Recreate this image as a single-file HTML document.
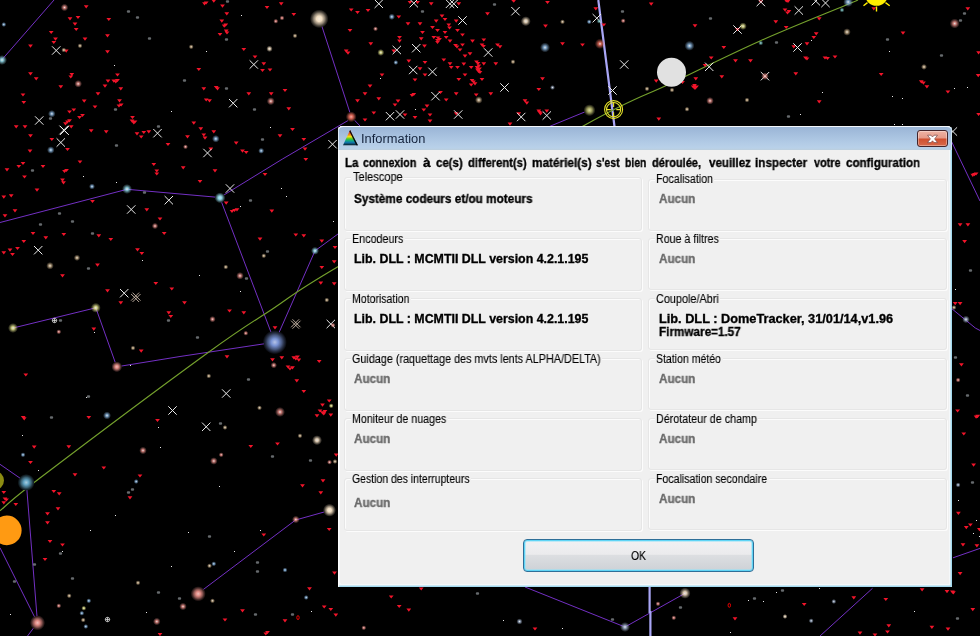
<!DOCTYPE html>
<html lang="fr"><head><meta charset="utf-8"><title>Information</title>
<style>
html,body{margin:0;padding:0;background:#000;}
body{width:980px;height:636px;overflow:hidden;position:relative;font-family:"Liberation Sans", sans-serif;font-size:12px;}
#sky{position:absolute;left:0;top:0;display:block}
#dlg{position:absolute;left:338px;top:126px;width:614px;height:461px;box-sizing:border-box;
  background:#f0f0f0;border-radius:4.5px 4.5px 1px 1px;overflow:hidden;
  box-shadow:inset 1px 0 0 #ffffff, inset -1.5px -1.5px 0 #a4d9ee, inset 0 0 0 3px #f5f8fa;}
#title{position:absolute;left:0;top:0;width:614px;height:24px;
  background:linear-gradient(#9ab5d6 0px,#a2bcdb 5px,#b1cae5 15px,#b9d1e9 21px,#bccedd 23px,#c4d2de 24px);
  border-top:1px solid #f4f8fc;box-sizing:border-box;border-radius:4.5px 4.5px 0 0;
  box-shadow:inset 1px 0 0 #dfeaf6, inset -1px 0 0 #cfe6f4;}
#title svg.ico{position:absolute;left:5px;top:3px}
#client{position:absolute;left:2px;top:24px;width:608px;height:433px;background:#f0f0f0}
#msg{position:absolute;left:0;top:0;width:608px;height:26px}
#close{position:absolute;left:579px;top:3px;width:31px;height:17px;box-sizing:border-box;border:1px solid #43252b;border-radius:3px;
  background:linear-gradient(#eeb3a4 0,#e59a88 48%,#cf4f2f 52%,#d8694a 100%);box-shadow:inset 0 0 0 1px rgba(255,255,255,.35)}
#close svg{position:absolute;left:8px;top:3px}
.gb{position:absolute;box-sizing:border-box;border:1px solid #e6e6e6;border-radius:3px;box-shadow:inset 1px 1px 0 #fcfcfc, 1px 1px 0 #fcfcfc}
.t{position:absolute;white-space:nowrap;line-height:14px;font-size:12px;color:#000;transform-origin:0 0;will-change:transform;-webkit-text-stroke:0.12px #000}
.t.b{font-weight:bold;-webkit-text-stroke:0.32px #000}
.t.g{color:#6a6a6a;-webkit-text-stroke-color:#6a6a6a}
.t.ttl{color:#14233c;-webkit-text-stroke:0}
.cap{position:absolute;height:13px;background:#f0f0f0}
#ok{position:absolute;left:183px;top:389px;width:231px;height:33px;box-sizing:border-box;border:1px solid #2f6f98;border-radius:4px;
  background:linear-gradient(#f1f1f3 0,#ebebed 46%,#dcdee1 50%,#cdd1d6 100%);
  box-shadow:inset 0 0 0 1px #5fd4f5, inset 0 0 0 2px rgba(150,225,248,.55);}
</style></head>
<body>
<svg id="sky" width="980" height="636" viewBox="0 0 980 636">
<defs>
<radialGradient id="g0"><stop offset="0" stop-color="#fff" stop-opacity="0.9"/><stop offset="0.3" stop-color="#62a4c4" stop-opacity="0.9"/><stop offset="0.65" stop-color="#62a4c4" stop-opacity="0.4"/><stop offset="1" stop-color="#62a4c4" stop-opacity="0"/></radialGradient>
<radialGradient id="G0"><stop offset="0" stop-color="#a9cddf"/><stop offset="0.3" stop-color="#62a4c4"/><stop offset="0.6" stop-color="#406b7f" stop-opacity="0.9"/><stop offset="0.82" stop-color="#27424e" stop-opacity="0.6"/><stop offset="1" stop-color="#27424e" stop-opacity="0"/></radialGradient>
<radialGradient id="g1"><stop offset="0" stop-color="#fff" stop-opacity="0.9"/><stop offset="0.3" stop-color="#6fb0b0" stop-opacity="0.9"/><stop offset="0.65" stop-color="#6fb0b0" stop-opacity="0.4"/><stop offset="1" stop-color="#6fb0b0" stop-opacity="0"/></radialGradient>
<radialGradient id="G1"><stop offset="0" stop-color="#b0d4d4"/><stop offset="0.3" stop-color="#6fb0b0"/><stop offset="0.6" stop-color="#487272" stop-opacity="0.9"/><stop offset="0.82" stop-color="#2c4646" stop-opacity="0.6"/><stop offset="1" stop-color="#2c4646" stop-opacity="0"/></radialGradient>
<radialGradient id="g2"><stop offset="0" stop-color="#fff" stop-opacity="0.9"/><stop offset="0.3" stop-color="#7892d4" stop-opacity="0.9"/><stop offset="0.65" stop-color="#7892d4" stop-opacity="0.4"/><stop offset="1" stop-color="#7892d4" stop-opacity="0"/></radialGradient>
<radialGradient id="G2"><stop offset="0" stop-color="#b5c3e7"/><stop offset="0.3" stop-color="#7892d4"/><stop offset="0.6" stop-color="#4e5f8a" stop-opacity="0.9"/><stop offset="0.82" stop-color="#303a55" stop-opacity="0.6"/><stop offset="1" stop-color="#303a55" stop-opacity="0"/></radialGradient>
<radialGradient id="g3"><stop offset="0" stop-color="#fff" stop-opacity="0.9"/><stop offset="0.3" stop-color="#86b0d8" stop-opacity="0.9"/><stop offset="0.65" stop-color="#86b0d8" stop-opacity="0.4"/><stop offset="1" stop-color="#86b0d8" stop-opacity="0"/></radialGradient>
<radialGradient id="G3"><stop offset="0" stop-color="#bcd4ea"/><stop offset="0.3" stop-color="#86b0d8"/><stop offset="0.6" stop-color="#57728c" stop-opacity="0.9"/><stop offset="0.82" stop-color="#364656" stop-opacity="0.6"/><stop offset="1" stop-color="#364656" stop-opacity="0"/></radialGradient>
<radialGradient id="g4"><stop offset="0" stop-color="#fff" stop-opacity="0.9"/><stop offset="0.3" stop-color="#8fd4e4" stop-opacity="0.9"/><stop offset="0.65" stop-color="#8fd4e4" stop-opacity="0.4"/><stop offset="1" stop-color="#8fd4e4" stop-opacity="0"/></radialGradient>
<radialGradient id="G4"><stop offset="0" stop-color="#c1e7f0"/><stop offset="0.3" stop-color="#8fd4e4"/><stop offset="0.6" stop-color="#5d8a94" stop-opacity="0.9"/><stop offset="0.82" stop-color="#39555b" stop-opacity="0.6"/><stop offset="1" stop-color="#39555b" stop-opacity="0"/></radialGradient>
<radialGradient id="g5"><stop offset="0" stop-color="#fff" stop-opacity="0.9"/><stop offset="0.3" stop-color="#a0b0c8" stop-opacity="0.9"/><stop offset="0.65" stop-color="#a0b0c8" stop-opacity="0.4"/><stop offset="1" stop-color="#a0b0c8" stop-opacity="0"/></radialGradient>
<radialGradient id="G5"><stop offset="0" stop-color="#cbd4e1"/><stop offset="0.3" stop-color="#a0b0c8"/><stop offset="0.6" stop-color="#687282" stop-opacity="0.9"/><stop offset="0.82" stop-color="#404650" stop-opacity="0.6"/><stop offset="1" stop-color="#404650" stop-opacity="0"/></radialGradient>
<radialGradient id="g6"><stop offset="0" stop-color="#fff" stop-opacity="0.9"/><stop offset="0.3" stop-color="#b4b46c" stop-opacity="0.9"/><stop offset="0.65" stop-color="#b4b46c" stop-opacity="0.4"/><stop offset="1" stop-color="#b4b46c" stop-opacity="0"/></radialGradient>
<radialGradient id="G6"><stop offset="0" stop-color="#d6d6ae"/><stop offset="0.3" stop-color="#b4b46c"/><stop offset="0.6" stop-color="#757546" stop-opacity="0.9"/><stop offset="0.82" stop-color="#48482b" stop-opacity="0.6"/><stop offset="1" stop-color="#48482b" stop-opacity="0"/></radialGradient>
<radialGradient id="g7"><stop offset="0" stop-color="#fff" stop-opacity="0.9"/><stop offset="0.3" stop-color="#c9b08c" stop-opacity="0.9"/><stop offset="0.65" stop-color="#c9b08c" stop-opacity="0.4"/><stop offset="1" stop-color="#c9b08c" stop-opacity="0"/></radialGradient>
<radialGradient id="G7"><stop offset="0" stop-color="#e1d4c0"/><stop offset="0.3" stop-color="#c9b08c"/><stop offset="0.6" stop-color="#83725b" stop-opacity="0.9"/><stop offset="0.82" stop-color="#504638" stop-opacity="0.6"/><stop offset="1" stop-color="#504638" stop-opacity="0"/></radialGradient>
<radialGradient id="g8"><stop offset="0" stop-color="#fff" stop-opacity="0.9"/><stop offset="0.3" stop-color="#dede8a" stop-opacity="0.9"/><stop offset="0.65" stop-color="#dede8a" stop-opacity="0.4"/><stop offset="1" stop-color="#dede8a" stop-opacity="0"/></radialGradient>
<radialGradient id="G8"><stop offset="0" stop-color="#ededbf"/><stop offset="0.3" stop-color="#dede8a"/><stop offset="0.6" stop-color="#90905a" stop-opacity="0.9"/><stop offset="0.82" stop-color="#595937" stop-opacity="0.6"/><stop offset="1" stop-color="#595937" stop-opacity="0"/></radialGradient>
<radialGradient id="g9"><stop offset="0" stop-color="#fff" stop-opacity="0.9"/><stop offset="0.3" stop-color="#e06a5a" stop-opacity="0.9"/><stop offset="0.65" stop-color="#e06a5a" stop-opacity="0.4"/><stop offset="1" stop-color="#e06a5a" stop-opacity="0"/></radialGradient>
<radialGradient id="G9"><stop offset="0" stop-color="#eeada4"/><stop offset="0.3" stop-color="#e06a5a"/><stop offset="0.6" stop-color="#92453a" stop-opacity="0.9"/><stop offset="0.82" stop-color="#5a2a24" stop-opacity="0.6"/><stop offset="1" stop-color="#5a2a24" stop-opacity="0"/></radialGradient>
<radialGradient id="g10"><stop offset="0" stop-color="#fff" stop-opacity="0.9"/><stop offset="0.3" stop-color="#e08a84" stop-opacity="0.9"/><stop offset="0.65" stop-color="#e08a84" stop-opacity="0.4"/><stop offset="1" stop-color="#e08a84" stop-opacity="0"/></radialGradient>
<radialGradient id="G10"><stop offset="0" stop-color="#eebfbb"/><stop offset="0.3" stop-color="#e08a84"/><stop offset="0.6" stop-color="#925a56" stop-opacity="0.9"/><stop offset="0.82" stop-color="#5a3735" stop-opacity="0.6"/><stop offset="1" stop-color="#5a3735" stop-opacity="0"/></radialGradient>
<radialGradient id="g11"><stop offset="0" stop-color="#fff" stop-opacity="0.9"/><stop offset="0.3" stop-color="#f0dcc0" stop-opacity="0.9"/><stop offset="0.65" stop-color="#f0dcc0" stop-opacity="0.4"/><stop offset="1" stop-color="#f0dcc0" stop-opacity="0"/></radialGradient>
<radialGradient id="G11"><stop offset="0" stop-color="#f7ecdc"/><stop offset="0.3" stop-color="#f0dcc0"/><stop offset="0.6" stop-color="#9c8f7d" stop-opacity="0.9"/><stop offset="0.82" stop-color="#60584d" stop-opacity="0.6"/><stop offset="1" stop-color="#60584d" stop-opacity="0"/></radialGradient>
</defs>
<rect width="980" height="636" fill="#000"/>
<path d="M54 0L2.5 59" stroke="#7330c4" stroke-width="1.0" fill="none"/>
<path d="M319.3 18.3L351.3 116.8" stroke="#7330c4" stroke-width="1.0" fill="none"/>
<path d="M351.3 118.6L282.5 159L219.8 197.5" stroke="#7330c4" stroke-width="1.0" fill="none"/>
<path d="M351.3 116.8L360 126" stroke="#7330c4" stroke-width="1.0" fill="none"/>
<path d="M545 128.3L589.5 110" stroke="#7330c4" stroke-width="1.0" fill="none"/>
<path d="M0 222.5L127 189.3L219.8 197.5" stroke="#7330c4" stroke-width="1.0" fill="none"/>
<path d="M219.8 197.5L274.8 342.2" stroke="#7330c4" stroke-width="1.0" fill="none"/>
<path d="M274.8 342.2L315 250.8L340 232.5" stroke="#7330c4" stroke-width="1.0" fill="none"/>
<path d="M274.8 342.2L180 356.5L116.8 366.8" stroke="#7330c4" stroke-width="1.0" fill="none"/>
<path d="M116.8 366.8L95.8 307.8L13 328" stroke="#7330c4" stroke-width="1.0" fill="none"/>
<path d="M0 464.3L26.3 482.5" stroke="#7330c4" stroke-width="1.0" fill="none"/>
<path d="M26.3 482.5L37.5 622.8" stroke="#7330c4" stroke-width="1.0" fill="none"/>
<path d="M0 547.8L37.5 622.8L27.5 636" stroke="#7330c4" stroke-width="1.0" fill="none"/>
<path d="M198 593.5L295.6 520L329.5 510.5" stroke="#7330c4" stroke-width="1.0" fill="none"/>
<path d="M525 587L625 627L685 593.3" stroke="#7330c4" stroke-width="1.0" fill="none"/>
<path d="M872.5 588.3L820 636" stroke="#7330c4" stroke-width="1.0" fill="none"/>
<path d="M953 557.8L980 548.4" stroke="#7330c4" stroke-width="1.0" fill="none"/>
<path d="M946 130L980 201" stroke="#7330c4" stroke-width="1.0" fill="none"/>
<path d="M940 299L975.3 328L980 330.5" stroke="#7330c4" stroke-width="1.0" fill="none"/>
<path d="M598.3 0L614.3 125L622 190" stroke="#a9a6f6" stroke-width="2.2" fill="none"/>
<path d="M649.6 580L649.6 612L650.4 612L650.4 636" stroke="#a9a6f6" stroke-width="2.2" fill="none"/>
<path d="M0 510.8C6.9 505.2 6.7 503.3 41.3 477C75.9 450.7 169.0 381.0 207.5 353C246.0 325.0 250.4 323.6 272.5 309C294.6 294.4 287.9 296.2 340 265.5C392.1 234.8 530.0 155.3 585 125C640.0 94.7 640.8 97.8 670 83.8C699.2 69.8 730.8 54.0 760 41C789.2 28.0 828.7 12.3 845 5.5C861.3 -1.3 855.8 0.9 858 0" stroke="#74a02c" stroke-width="1.15" fill="none"/>
<path d="M83.8 5.2h4.8l-2.4 3.2zM75.6 15.9h4.8l-2.4 3.2zM72.6 22.6h4.8l-2.4 3.2zM73.8 27.9h4.8l-2.4 3.2zM106.4 17.9h4.8l-2.4 3.2zM48.8 30.9h4.8l-2.4 3.2zM53.1 37.6h4.8l-2.4 3.2zM51.4 40.9h4.8l-2.4 3.2zM82.6 37.6h4.8l-2.4 3.2zM105.1 34.2h4.8l-2.4 3.2zM28.1 44.6h4.8l-2.4 3.2zM105.1 50.2h4.8l-2.4 3.2zM28.1 72.2h4.8l-2.4 3.2zM33.8 77.2h4.8l-2.4 3.2zM69.4 72.9h4.8l-2.4 3.2zM68.4 75.4h4.8l-2.4 3.2zM58.4 85.2h4.8l-2.4 3.2zM115.1 73.4h4.8l-2.4 3.2zM105.6 79.6h4.8l-2.4 3.2zM111.4 79.6h4.8l-2.4 3.2zM113.4 80.4h4.8l-2.4 3.2zM115.1 78.9h4.8l-2.4 3.2zM102.6 84.6h4.8l-2.4 3.2zM95.6 92.2h4.8l-2.4 3.2zM20.6 93.4h4.8l-2.4 3.2zM21.4 100.9h4.8l-2.4 3.2zM81.8 99.6h4.8l-2.4 3.2zM92.6 105.4h4.8l-2.4 3.2zM117.1 99.2h4.8l-2.4 3.2zM118.8 103.4h4.8l-2.4 3.2zM116.6 104.4h4.8l-2.4 3.2zM71.4 108.4h4.8l-2.4 3.2zM67.1 110.4h4.8l-2.4 3.2zM80.1 113.9h4.8l-2.4 3.2zM77.1 115.9h4.8l-2.4 3.2zM67.1 119.2h4.8l-2.4 3.2zM63.1 122.2h4.8l-2.4 3.2zM65.1 120.4h4.8l-2.4 3.2zM13.8 125.2h4.8l-2.4 3.2zM22.6 125.2h4.8l-2.4 3.2zM68.8 125.2h4.8l-2.4 3.2zM28.1 134.2h4.8l-2.4 3.2zM49.4 137.9h4.8l-2.4 3.2zM88.8 129.2h4.8l-2.4 3.2zM103.8 130.2h4.8l-2.4 3.2zM130.1 115.9h4.8l-2.4 3.2zM129.6 119.6h4.8l-2.4 3.2zM131.4 121.4h4.8l-2.4 3.2zM132.6 120.4h4.8l-2.4 3.2zM134.6 132.2h4.8l-2.4 3.2zM141.4 130.9h4.8l-2.4 3.2zM146.4 130.2h4.8l-2.4 3.2zM138.8 135.4h4.8l-2.4 3.2zM165.6 142.9h4.8l-2.4 3.2zM191.4 121.6h4.8l-2.4 3.2zM198.4 127.2h4.8l-2.4 3.2zM201.4 133.4h4.8l-2.4 3.2zM202.6 136.6h4.8l-2.4 3.2zM211.4 130.2h4.8l-2.4 3.2zM185.1 135.2h4.8l-2.4 3.2zM196.4 67.9h4.8l-2.4 3.2zM201.4 87.2h4.8l-2.4 3.2zM213.8 85.9h4.8l-2.4 3.2zM215.1 87.2h4.8l-2.4 3.2zM203.8 98.4h4.8l-2.4 3.2zM207.1 99.2h4.8l-2.4 3.2zM202.1 2.2h4.8l-2.4 3.2zM203.8 1.4h4.8l-2.4 3.2zM211.4 -0.4h4.8l-2.4 3.2zM220.1 4.6h4.8l-2.4 3.2zM224.4 12.2h4.8l-2.4 3.2zM219.4 19.6h4.8l-2.4 3.2zM221.8 24.6h4.8l-2.4 3.2zM223.4 23.4h4.8l-2.4 3.2zM223.8 29.6h4.8l-2.4 3.2zM224.6 31.4h4.8l-2.4 3.2zM217.6 32.9h4.8l-2.4 3.2zM241.4 47.9h4.8l-2.4 3.2zM233.8 141.6h4.8l-2.4 3.2zM240.1 149.6h4.8l-2.4 3.2zM27.6 149.6h4.8l-2.4 3.2zM65.1 147.9h4.8l-2.4 3.2zM208.4 147.6h4.8l-2.4 3.2zM67.6 17.2h4.8l-2.4 3.2zM63.8 49.6h4.8l-2.4 3.2zM118.4 87.2h4.8l-2.4 3.2zM278.8 2.2h4.8l-2.4 3.2zM264.6 5.9h4.8l-2.4 3.2zM291.4 12.9h4.8l-2.4 3.2zM252.6 55.4h4.8l-2.4 3.2zM261.4 62.2h4.8l-2.4 3.2zM260.1 68.9h4.8l-2.4 3.2zM267.6 68.4h4.8l-2.4 3.2zM246.4 92.2h4.8l-2.4 3.2zM268.8 92.2h4.8l-2.4 3.2zM282.6 88.9h4.8l-2.4 3.2zM286.4 107.2h4.8l-2.4 3.2zM290.1 127.9h4.8l-2.4 3.2zM277.6 134.2h4.8l-2.4 3.2zM301.4 137.9h4.8l-2.4 3.2zM302.6 147.6h4.8l-2.4 3.2zM243.8 150.9h4.8l-2.4 3.2zM348.8 8.4h4.8l-2.4 3.2zM355.1 10.9h4.8l-2.4 3.2zM365.6 8.9h4.8l-2.4 3.2zM396.4 15.4h4.8l-2.4 3.2zM347.6 28.9h4.8l-2.4 3.2zM405.6 22.2h4.8l-2.4 3.2zM343.8 49.6h4.8l-2.4 3.2zM345.6 51.6h4.8l-2.4 3.2zM368.4 42.2h4.8l-2.4 3.2zM397.1 35.9h4.8l-2.4 3.2zM397.1 39.6h4.8l-2.4 3.2zM391.4 49.6h4.8l-2.4 3.2zM406.4 59.6h4.8l-2.4 3.2zM367.6 84.6h4.8l-2.4 3.2zM362.6 92.2h4.8l-2.4 3.2zM355.1 99.2h4.8l-2.4 3.2zM376.4 97.2h4.8l-2.4 3.2zM395.6 99.6h4.8l-2.4 3.2zM392.6 103.4h4.8l-2.4 3.2zM371.4 111.4h4.8l-2.4 3.2zM362.6 118.4h4.8l-2.4 3.2zM412.6 78.4h4.8l-2.4 3.2zM411.4 92.9h4.8l-2.4 3.2zM409.6 93.9h4.8l-2.4 3.2zM417.6 67.2h4.8l-2.4 3.2zM422.6 60.9h4.8l-2.4 3.2zM422.6 73.4h4.8l-2.4 3.2zM421.4 108.4h4.8l-2.4 3.2zM427.6 113.4h4.8l-2.4 3.2zM427.6 119.6h4.8l-2.4 3.2zM412.6 115.9h4.8l-2.4 3.2zM407.6 0.9h4.8l-2.4 3.2zM415.1 0.9h4.8l-2.4 3.2zM417.6 22.2h4.8l-2.4 3.2zM420.1 30.9h4.8l-2.4 3.2zM418.8 37.2h4.8l-2.4 3.2zM422.1 44.6h4.8l-2.4 3.2zM379.6 73.4h4.8l-2.4 3.2zM402.6 113.4h4.8l-2.4 3.2zM20.6 161.9h4.8l-2.4 3.2zM16.4 164.9h4.8l-2.4 3.2zM4.6 168.2h4.8l-2.4 3.2zM40.6 164.9h4.8l-2.4 3.2zM77.6 160.4h4.8l-2.4 3.2zM62.1 169.9h4.8l-2.4 3.2zM64.1 168.9h4.8l-2.4 3.2zM22.1 175.4h4.8l-2.4 3.2zM60.1 178.6h4.8l-2.4 3.2zM61.1 181.2h4.8l-2.4 3.2zM34.6 188.6h4.8l-2.4 3.2zM1.4 195.6h4.8l-2.4 3.2zM8.8 194.2h4.8l-2.4 3.2zM12.6 209.2h4.8l-2.4 3.2zM2.6 214.2h4.8l-2.4 3.2zM30.6 231.9h4.8l-2.4 3.2zM43.4 236.2h4.8l-2.4 3.2zM61.4 232.9h4.8l-2.4 3.2zM21.4 239.9h4.8l-2.4 3.2zM7.6 248.6h4.8l-2.4 3.2zM15.1 246.9h4.8l-2.4 3.2zM1.4 251.2h4.8l-2.4 3.2zM10.1 252.9h4.8l-2.4 3.2zM96.4 234.2h4.8l-2.4 3.2zM108.4 237.9h4.8l-2.4 3.2zM135.1 248.2h4.8l-2.4 3.2zM139.4 251.9h4.8l-2.4 3.2zM95.1 263.6h4.8l-2.4 3.2zM60.1 274.2h4.8l-2.4 3.2zM144.4 208.2h4.8l-2.4 3.2zM157.6 217.4h4.8l-2.4 3.2zM161.8 231.9h4.8l-2.4 3.2zM151.4 162.9h4.8l-2.4 3.2zM154.4 169.4h4.8l-2.4 3.2zM154.4 172.4h4.8l-2.4 3.2zM180.8 166.2h4.8l-2.4 3.2zM212.6 169.2h4.8l-2.4 3.2zM197.6 179.9h4.8l-2.4 3.2zM223.8 201.6h4.8l-2.4 3.2zM229.6 209.9h4.8l-2.4 3.2zM232.1 208.9h4.8l-2.4 3.2zM234.6 208.2h4.8l-2.4 3.2zM153.4 281.9h4.8l-2.4 3.2zM169.4 287.4h4.8l-2.4 3.2zM105.1 289.2h4.8l-2.4 3.2zM118.4 301.2h4.8l-2.4 3.2zM182.1 301.2h4.8l-2.4 3.2zM166.4 311.2h4.8l-2.4 3.2zM168.4 314.9h4.8l-2.4 3.2zM227.1 309.4h4.8l-2.4 3.2zM241.4 311.2h4.8l-2.4 3.2zM90.1 199.9h4.8l-2.4 3.2zM91.4 327.6h4.8l-2.4 3.2zM138.8 349.6h4.8l-2.4 3.2zM224.6 355.2h4.8l-2.4 3.2zM23.4 373.4h4.8l-2.4 3.2zM21.8 417.2h4.8l-2.4 3.2zM20.8 415.9h4.8l-2.4 3.2zM86.4 415.9h4.8l-2.4 3.2zM155.1 418.9h4.8l-2.4 3.2zM31.8 445.6h4.8l-2.4 3.2zM66.4 445.2h4.8l-2.4 3.2zM28.1 460.9h4.8l-2.4 3.2zM101.4 466.4h4.8l-2.4 3.2zM72.6 473.2h4.8l-2.4 3.2zM137.6 474.4h4.8l-2.4 3.2zM1.4 490.9h4.8l-2.4 3.2zM2.6 497.4h4.8l-2.4 3.2zM4.1 498.4h4.8l-2.4 3.2zM1.4 501.2h4.8l-2.4 3.2zM13.4 502.9h4.8l-2.4 3.2zM51.4 489.9h4.8l-2.4 3.2zM56.8 492.2h4.8l-2.4 3.2zM55.6 507.2h4.8l-2.4 3.2zM45.1 512.2h4.8l-2.4 3.2zM45.1 521.2h4.8l-2.4 3.2zM47.6 539.9h4.8l-2.4 3.2zM60.1 543.4h4.8l-2.4 3.2zM42.6 557.9h4.8l-2.4 3.2zM127.6 496.2h4.8l-2.4 3.2zM222.6 618.4h4.8l-2.4 3.2zM240.1 609.2h4.8l-2.4 3.2zM157.6 632.9h4.8l-2.4 3.2zM262.6 172.9h4.8l-2.4 3.2zM303.4 157.9h4.8l-2.4 3.2zM269.4 209.6h4.8l-2.4 3.2zM257.6 237.6h4.8l-2.4 3.2zM293.4 233.4h4.8l-2.4 3.2zM301.4 234.2h4.8l-2.4 3.2zM319.4 239.6h4.8l-2.4 3.2zM332.6 245.9h4.8l-2.4 3.2zM331.8 260.2h4.8l-2.4 3.2zM319.4 265.9h4.8l-2.4 3.2zM318.4 281.6h4.8l-2.4 3.2zM331.8 282.2h4.8l-2.4 3.2zM272.6 326.2h4.8l-2.4 3.2zM270.1 358.2h4.8l-2.4 3.2zM279.4 356.2h4.8l-2.4 3.2zM291.4 356.2h4.8l-2.4 3.2zM293.4 357.4h4.8l-2.4 3.2zM295.1 355.4h4.8l-2.4 3.2zM296.4 358.6h4.8l-2.4 3.2zM285.6 365.4h4.8l-2.4 3.2zM287.6 367.4h4.8l-2.4 3.2zM290.1 366.2h4.8l-2.4 3.2zM316.8 359.9h4.8l-2.4 3.2zM294.4 379.2h4.8l-2.4 3.2zM301.4 389.9h4.8l-2.4 3.2zM320.1 403.6h4.8l-2.4 3.2zM326.8 399.4h4.8l-2.4 3.2zM317.6 409.4h4.8l-2.4 3.2zM320.1 411.2h4.8l-2.4 3.2zM322.6 409.9h4.8l-2.4 3.2zM321.4 412.4h4.8l-2.4 3.2zM314.6 414.2h4.8l-2.4 3.2zM328.4 413.6h4.8l-2.4 3.2zM248.4 444.9h4.8l-2.4 3.2zM275.1 442.4h4.8l-2.4 3.2zM333.8 453.6h4.8l-2.4 3.2zM320.6 479.2h4.8l-2.4 3.2zM300.1 484.2h4.8l-2.4 3.2zM318.4 491.2h4.8l-2.4 3.2zM261.4 533.4h4.8l-2.4 3.2zM326.8 527.9h4.8l-2.4 3.2zM332.1 571.6h4.8l-2.4 3.2zM307.1 587.2h4.8l-2.4 3.2zM321.8 605.4h4.8l-2.4 3.2zM328.4 607.9h4.8l-2.4 3.2zM333.4 613.6h4.8l-2.4 3.2zM282.6 619.2h4.8l-2.4 3.2zM265.1 630.9h4.8l-2.4 3.2zM263.4 632.4h4.8l-2.4 3.2zM388.8 595.4h4.8l-2.4 3.2zM396.8 604.9h4.8l-2.4 3.2zM406.4 608.6h4.8l-2.4 3.2zM418.8 587.4h4.8l-2.4 3.2zM532.6 627.4h4.8l-2.4 3.2zM732.6 617.2h4.8l-2.4 3.2zM801.8 602.9h4.8l-2.4 3.2zM851.4 596.2h4.8l-2.4 3.2zM883.4 597.9h4.8l-2.4 3.2zM886.4 624.2h4.8l-2.4 3.2zM885.1 630.4h4.8l-2.4 3.2zM857.6 631.6h4.8l-2.4 3.2zM872.6 633.4h4.8l-2.4 3.2zM960.6 543.2h4.8l-2.4 3.2zM974.5 544.3h4.8l-2.4 3.2zM957.7 572.1h4.8l-2.4 3.2zM919.7 588.2h4.8l-2.4 3.2zM944.6 590.1h4.8l-2.4 3.2zM950.0 590.5h4.8l-2.4 3.2zM951.0 591.3h4.8l-2.4 3.2zM970.4 608.1h4.8l-2.4 3.2zM929.5 625.8h4.8l-2.4 3.2zM945.6 627.5h4.8l-2.4 3.2zM970.4 173.7h4.8l-2.4 3.2zM972.1 173.1h4.8l-2.4 3.2zM973.7 172.4h4.8l-2.4 3.2zM957.7 223.2h4.8l-2.4 3.2zM965.5 223.2h4.8l-2.4 3.2zM962.2 240.1h4.8l-2.4 3.2zM952.8 302.1h4.8l-2.4 3.2zM957.7 302.1h4.8l-2.4 3.2zM959.0 363.2h4.8l-2.4 3.2zM955.2 409.4h4.8l-2.4 3.2zM973.7 415.6h4.8l-2.4 3.2zM975.3 414.8h4.8l-2.4 3.2zM961.4 432.4h4.8l-2.4 3.2zM971.2 463.6h4.8l-2.4 3.2zM956.0 511.7h4.8l-2.4 3.2zM968.0 523.4h4.8l-2.4 3.2zM963.9 526.1h4.8l-2.4 3.2zM977.0 528.1h4.8l-2.4 3.2zM545.1 0.9h4.8l-2.4 3.2zM511.4 -0.4h4.8l-2.4 3.2zM543.1 24.6h4.8l-2.4 3.2zM560.1 42.2h4.8l-2.4 3.2zM580.1 43.4h4.8l-2.4 3.2zM593.4 7.2h4.8l-2.4 3.2zM601.4 23.4h4.8l-2.4 3.2zM648.8 2.6h4.8l-2.4 3.2zM540.1 77.2h4.8l-2.4 3.2zM536.4 87.9h4.8l-2.4 3.2zM522.6 99.2h4.8l-2.4 3.2zM524.4 101.6h4.8l-2.4 3.2zM536.4 109.6h4.8l-2.4 3.2zM538.1 112.2h4.8l-2.4 3.2zM537.1 110.9h4.8l-2.4 3.2zM544.4 109.6h4.8l-2.4 3.2zM653.8 79.6h4.8l-2.4 3.2zM656.4 117.6h4.8l-2.4 3.2zM485.1 12.2h4.8l-2.4 3.2zM507.6 122.6h4.8l-2.4 3.2zM428.8 2.2h4.8l-2.4 3.2zM456.4 2.2h4.8l-2.4 3.2zM439.6 14.6h4.8l-2.4 3.2zM433.8 19.6h4.8l-2.4 3.2zM442.6 17.9h4.8l-2.4 3.2zM446.4 23.4h4.8l-2.4 3.2zM430.1 25.9h4.8l-2.4 3.2zM435.1 28.9h4.8l-2.4 3.2zM447.1 26.4h4.8l-2.4 3.2zM453.8 19.6h4.8l-2.4 3.2zM455.1 28.9h4.8l-2.4 3.2zM442.6 30.9h4.8l-2.4 3.2zM435.6 36.4h4.8l-2.4 3.2zM437.1 37.9h4.8l-2.4 3.2zM435.1 38.9h4.8l-2.4 3.2zM431.4 35.9h4.8l-2.4 3.2zM435.1 40.9h4.8l-2.4 3.2zM443.8 35.9h4.8l-2.4 3.2zM447.6 39.6h4.8l-2.4 3.2zM453.1 43.9h4.8l-2.4 3.2zM454.6 45.4h4.8l-2.4 3.2zM460.1 33.4h4.8l-2.4 3.2zM460.1 43.4h4.8l-2.4 3.2zM457.6 48.4h4.8l-2.4 3.2zM470.1 39.6h4.8l-2.4 3.2zM467.6 52.2h4.8l-2.4 3.2zM462.6 54.6h4.8l-2.4 3.2zM481.4 38.4h4.8l-2.4 3.2zM479.6 43.4h4.8l-2.4 3.2zM481.1 44.9h4.8l-2.4 3.2zM495.1 43.4h4.8l-2.4 3.2zM497.6 45.2h4.8l-2.4 3.2zM441.4 58.4h4.8l-2.4 3.2zM447.6 62.2h4.8l-2.4 3.2zM448.8 65.9h4.8l-2.4 3.2zM455.1 65.9h4.8l-2.4 3.2zM461.4 62.6h4.8l-2.4 3.2zM468.8 65.9h4.8l-2.4 3.2zM474.1 60.4h4.8l-2.4 3.2zM475.6 61.9h4.8l-2.4 3.2zM476.4 64.6h4.8l-2.4 3.2zM474.6 65.9h4.8l-2.4 3.2zM475.1 68.4h4.8l-2.4 3.2zM477.1 67.4h4.8l-2.4 3.2zM477.6 70.9h4.8l-2.4 3.2zM476.1 69.9h4.8l-2.4 3.2zM481.4 62.2h4.8l-2.4 3.2zM493.4 62.2h4.8l-2.4 3.2zM456.4 77.9h4.8l-2.4 3.2zM462.6 73.4h4.8l-2.4 3.2zM469.6 78.9h4.8l-2.4 3.2zM471.1 80.4h4.8l-2.4 3.2zM472.6 82.2h4.8l-2.4 3.2zM468.8 83.4h4.8l-2.4 3.2zM479.6 77.9h4.8l-2.4 3.2zM424.6 104.6h4.8l-2.4 3.2zM438.1 90.9h4.8l-2.4 3.2zM443.8 98.4h4.8l-2.4 3.2zM453.8 92.2h4.8l-2.4 3.2zM473.8 93.4h4.8l-2.4 3.2zM488.4 92.2h4.8l-2.4 3.2zM453.8 112.2h4.8l-2.4 3.2zM516.4 112.2h4.8l-2.4 3.2zM510.1 -1.6h4.8l-2.4 3.2zM692.6 24.2h4.8l-2.4 3.2zM721.4 45.9h4.8l-2.4 3.2zM708.8 56.4h4.8l-2.4 3.2zM702.6 63.9h4.8l-2.4 3.2zM733.1 59.2h4.8l-2.4 3.2zM748.1 59.2h4.8l-2.4 3.2zM719.4 75.2h4.8l-2.4 3.2zM693.4 77.2h4.8l-2.4 3.2zM690.8 85.4h4.8l-2.4 3.2zM692.6 86.9h4.8l-2.4 3.2zM694.1 85.4h4.8l-2.4 3.2zM692.1 83.9h4.8l-2.4 3.2zM680.1 80.9h4.8l-2.4 3.2zM783.8 -0.8h4.8l-2.4 3.2zM785.6 -0.1h4.8l-2.4 3.2zM782.6 8.4h4.8l-2.4 3.2zM785.1 11.4h4.8l-2.4 3.2zM786.6 9.9h4.8l-2.4 3.2zM773.4 20.2h4.8l-2.4 3.2zM783.8 25.9h4.8l-2.4 3.2zM816.8 17.2h4.8l-2.4 3.2zM813.8 32.2h4.8l-2.4 3.2zM811.4 35.9h4.8l-2.4 3.2zM804.6 42.2h4.8l-2.4 3.2zM791.4 45.2h4.8l-2.4 3.2zM803.1 56.4h4.8l-2.4 3.2zM804.6 57.4h4.8l-2.4 3.2zM822.6 56.4h4.8l-2.4 3.2zM825.1 56.9h4.8l-2.4 3.2zM832.6 55.4h4.8l-2.4 3.2zM793.4 72.2h4.8l-2.4 3.2zM816.8 100.2h4.8l-2.4 3.2zM878.8 72.9h4.8l-2.4 3.2zM900.6 31.6h4.8l-2.4 3.2zM871.4 7.2h4.8l-2.4 3.2zM758.4 0.4h4.8l-2.4 3.2zM735.1 27.9h4.8l-2.4 3.2zM965.4 7.2h4.8l-2.4 3.2zM918.9 80.2h4.8l-2.4 3.2zM921.0 81.6h4.8l-2.4 3.2zM924.5 85.3h4.8l-2.4 3.2zM945.5 90.4h4.8l-2.4 3.2zM976.2 51.2h4.8l-2.4 3.2zM975.8 74.1h4.8l-2.4 3.2zM976.2 112.9h4.8l-2.4 3.2z" fill="#f2142a"/>
<path d="M128 11.5h1M137 17.5h1M149 38.5h1M184 80.5h1M226 39.5h1M226 88.5h1M115 109.5h1M116 145.5h1M158 126.5h1M227 1.5h1M50 118.5h1M254 109.5h1M262 139.5h1M422 11.5h1M32 170.5h1M59 213.5h1M72 221.5h1M40 224.5h1M92 233.5h1M88 268.5h1M144 192.5h1M220 423.5h1M51 417.5h1M88 396.5h1M197 337.5h1M60 320.5h1M168 320.5h1M132 489.5h1M128 492.5h1M34 564.5h1M72 578.5h1M209 536.5h1M158 592.5h1M179 598.5h1M14 581.5h1M60 553.5h1M267 251.5h1M250 200.5h1M246 278.5h1M248 379.5h1M272 456.5h1M310 460.5h1M257 562.5h1M257 571.5h1M255 614.5h1M292 614.5h1M477 593.5h1M612 619.5h1M754 598.5h1M782 590.5h1M680 607.5h1M957 618.5h1M970 270.5h1M955 357.5h1M967 395.5h1M972 482.5h1M494 4.5h1M622 11.5h1M710 18.5h1M887 39.5h1M788 116.5h1M776 42.5h1M941 55.5h1M960 20.5h1M964 13.5h1" stroke="#808488" stroke-width="2.4" stroke-linecap="round" opacity="0.8" fill="none"/>
<path d="M114 65.5h1M171 111.5h1M206 51.5h1M241 15.5h1M380 78.5h1M270 127.5h1M415 109.5h1M116 182.5h1M83 176.5h1M142 260.5h1M199 275.5h1M86 397.5h1M22 435.5h1M158 427.5h1M160 447.5h1M38 470.5h1M94 332.5h1M130 365.5h1M115 515.5h1M90 530.5h1M188 532.5h1M219 486.5h1M171 566.5h1M234 551.5h1M146 612.5h1M62 551.5h1M10 614.5h1M281 188.5h1M286 196.5h1M240 206.5h1M333 221.5h1M240 291.5h1M260 530.5h1M311 611.5h1M503 620.5h1M562 628.5h1M748 600.5h1M763 601.5h1M776 592.5h1M730 632.5h1M819 588.5h1M973 533.5h1M979 536.5h1M914 611.5h1M955 289.5h1M958 500.5h1M976 520.5h1M811 40.5h1M889 51.5h1M822 92.5h1M892 96.5h1M902 98.5h1M800 114.5h1M894 124.5h1M902 124.5h1M954 88.5h1M967 87.5h1" stroke="#e8e8e8" stroke-width="1" shape-rendering="crispEdges" fill="none"/>
<path d="M52.0 46.3l8.4 8.4M52.0 54.7l8.4 -8.4M35.0 116.3l8.4 8.4M35.0 124.7l8.4 -8.4M59.4 125.6l8.8 8.8M59.4 134.4l8.8 -8.8M60.1 126.1l8.8 8.8M60.1 134.9l8.8 -8.8M56.599999999999994 138.3l8.4 8.4M56.599999999999994 146.7l8.4 -8.4M153.3 129.0l8.4 8.4M153.3 137.39999999999998l8.4 -8.4M229.0 99.0l8.4 8.4M229.0 107.4l8.4 -8.4M203.3 148.8l8.4 8.4M203.3 157.2l8.4 -8.4M374.6 -0.40000000000000036l8.4 8.4M374.6 8.0l8.4 -8.4M409.6 -1.0l8.4 8.4M409.6 7.4l8.4 -8.4M392.6 45.8l8.4 8.4M392.6 54.2l8.4 -8.4M412.0 44.0l8.4 8.4M412.0 52.400000000000006l8.4 -8.4M409.0 65.8l8.4 8.4M409.0 74.2l8.4 -8.4M249.60000000000002 60.3l8.4 8.4M249.60000000000002 68.7l8.4 -8.4M385.8 112.0l8.4 8.4M385.8 120.4l8.4 -8.4M395.8 110.3l8.4 8.4M395.8 118.7l8.4 -8.4M328.3 140.0l8.4 8.4M328.3 148.39999999999998l8.4 -8.4M225.8 184.3l8.4 8.4M225.8 192.7l8.4 -8.4M164.60000000000002 196.0l8.4 8.4M164.60000000000002 204.39999999999998l8.4 -8.4M126.99999999999999 205.3l8.4 8.4M126.99999999999999 213.7l8.4 -8.4M34.0 246.0l8.4 8.4M34.0 254.39999999999998l8.4 -8.4M120.0 289.0l8.4 8.4M120.0 297.4l8.4 -8.4M222.0 389.3l8.4 8.4M222.0 397.7l8.4 -8.4M168.3 406.3l8.4 8.4M168.3 414.7l8.4 -8.4M202.0 422.6l8.4 8.4M202.0 431.0l8.4 -8.4M326.6 319.8l8.4 8.4M326.6 328.2l8.4 -8.4M948.6999999999999 127.3l8.4 8.4M948.6999999999999 135.7l8.4 -8.4M445.8 -0.40000000000000036l8.4 8.4M445.8 8.0l8.4 -8.4M449.6 -0.40000000000000036l8.4 8.4M449.6 8.0l8.4 -8.4M458.3 16.3l8.4 8.4M458.3 24.7l8.4 -8.4M511.3 6.999999999999999l8.4 8.4M511.3 15.399999999999999l8.4 -8.4M484.0 48.3l8.4 8.4M484.0 56.7l8.4 -8.4M428.3 67.6l8.4 8.4M428.3 76.0l8.4 -8.4M500.3 83.3l8.4 8.4M500.3 91.7l8.4 -8.4M431.3 92.0l8.4 8.4M431.3 100.4l8.4 -8.4M454.0 110.3l8.4 8.4M454.0 118.7l8.4 -8.4M517.0 112.8l8.4 8.4M517.0 121.2l8.4 -8.4M542.5999999999999 111.3l8.4 8.4M542.5999999999999 119.7l8.4 -8.4M592.5999999999999 14.0l8.4 8.4M592.5999999999999 22.4l8.4 -8.4M620.0 60.3l8.4 8.4M620.0 68.7l8.4 -8.4M608.3 86.3l8.4 8.4M608.3 94.7l8.4 -8.4M756.5999999999999 -2.2l8.4 8.4M756.5999999999999 6.2l8.4 -8.4M794.5999999999999 6.3l8.4 8.4M794.5999999999999 14.7l8.4 -8.4M811.5999999999999 -3.0l8.4 8.4M811.5999999999999 5.4l8.4 -8.4M821.3 -1.2000000000000002l8.4 8.4M821.3 7.2l8.4 -8.4M733.3 25.3l8.4 8.4M733.3 33.7l8.4 -8.4M793.3 43.3l8.4 8.4M793.3 51.7l8.4 -8.4M705.0 62.599999999999994l8.4 8.4M705.0 71.0l8.4 -8.4M760.8 72.0l8.4 8.4M760.8 80.4l8.4 -8.4" stroke="#ececec" stroke-width="1" fill="none"/>
<circle cx="64.5" cy="7.5" r="3.8" fill="url(#g10)"/>
<circle cx="2.0" cy="60.0" r="5.0" fill="url(#g4)"/>
<circle cx="80.0" cy="45.8" r="2.5" fill="url(#g7)"/>
<circle cx="63.8" cy="50.0" r="2.5" fill="url(#g7)"/>
<circle cx="78.2" cy="83.8" r="3.8" fill="url(#g10)"/>
<circle cx="51.8" cy="113.8" r="3.8" fill="url(#g3)"/>
<circle cx="50.8" cy="150.0" r="3.8" fill="url(#g3)"/>
<circle cx="215.8" cy="138.8" r="3.8" fill="url(#g3)"/>
<circle cx="191.2" cy="46.8" r="2.5" fill="url(#g7)"/>
<circle cx="185.5" cy="146.8" r="2.5" fill="url(#g10)"/>
<circle cx="3.8" cy="24.5" r="2.5" fill="url(#g3)"/>
<circle cx="319.2" cy="18.8" r="8.4" fill="#000"/>
<circle cx="319.2" cy="18.8" r="9.3" fill="url(#G11)"/>
<circle cx="351.2" cy="116.8" r="4.9" fill="#000"/>
<circle cx="351.2" cy="116.8" r="5.4" fill="url(#G9)"/>
<circle cx="275.8" cy="21.2" r="2.5" fill="url(#g10)"/>
<circle cx="282.0" cy="18.0" r="2.5" fill="url(#g10)"/>
<circle cx="295.0" cy="35.8" r="2.5" fill="url(#g7)"/>
<circle cx="269.5" cy="48.8" r="3.2" fill="url(#g11)"/>
<circle cx="270.8" cy="101.2" r="4.0" fill="url(#g10)"/>
<circle cx="391.8" cy="16.8" r="3.2" fill="url(#g3)"/>
<circle cx="375.5" cy="28.8" r="2.5" fill="url(#g10)"/>
<circle cx="380.8" cy="52.5" r="3.5" fill="url(#g8)"/>
<circle cx="395.8" cy="62.5" r="2.5" fill="url(#g3)"/>
<circle cx="261.2" cy="150.8" r="3.0" fill="url(#g3)"/>
<circle cx="92.0" cy="186.5" r="3.0" fill="url(#g3)"/>
<circle cx="127.0" cy="189.0" r="5.0" fill="url(#g4)"/>
<circle cx="220.0" cy="197.8" r="4.9" fill="#000"/>
<circle cx="220.0" cy="197.8" r="5.4" fill="url(#G4)"/>
<circle cx="155.0" cy="226.0" r="3.2" fill="url(#g10)"/>
<circle cx="77.0" cy="257.8" r="3.2" fill="url(#g7)"/>
<circle cx="50.0" cy="265.8" r="3.8" fill="url(#g7)"/>
<circle cx="225.8" cy="267.0" r="2.5" fill="url(#g7)"/>
<circle cx="240.0" cy="275.8" r="3.8" fill="url(#g10)"/>
<circle cx="95.8" cy="307.8" r="5.0" fill="url(#g8)"/>
<circle cx="13.0" cy="328.0" r="5.0" fill="url(#g8)"/>
<circle cx="116.8" cy="366.8" r="4.9" fill="#000"/>
<circle cx="116.8" cy="366.8" r="5.4" fill="url(#G10)"/>
<circle cx="107.0" cy="415.5" r="4.0" fill="url(#g3)"/>
<circle cx="58.8" cy="331.8" r="2.5" fill="url(#g10)"/>
<circle cx="133.0" cy="348.0" r="2.5" fill="url(#g7)"/>
<circle cx="208.8" cy="376.0" r="2.5" fill="url(#g7)"/>
<circle cx="212.5" cy="319.2" r="3.2" fill="url(#g10)"/>
<circle cx="143.0" cy="450.5" r="3.8" fill="url(#g10)"/>
<circle cx="213.8" cy="461.0" r="3.8" fill="url(#g10)"/>
<circle cx="221.2" cy="454.8" r="2.5" fill="url(#g10)"/>
<circle cx="225.0" cy="427.5" r="2.5" fill="url(#g7)"/>
<circle cx="23.0" cy="454.8" r="2.5" fill="url(#g3)"/>
<circle cx="26.2" cy="482.5" r="7.8" fill="#000"/>
<circle cx="26.2" cy="482.5" r="8.6" fill="url(#G0)"/>
<circle cx="37.5" cy="622.8" r="6.9" fill="#000"/>
<circle cx="37.5" cy="622.8" r="7.6" fill="url(#G10)"/>
<circle cx="198.2" cy="593.8" r="6.9" fill="#000"/>
<circle cx="198.2" cy="593.8" r="7.6" fill="url(#G10)"/>
<circle cx="136.2" cy="481.5" r="2.5" fill="url(#g3)"/>
<circle cx="213.8" cy="563.8" r="2.5" fill="url(#g3)"/>
<circle cx="209.5" cy="565.8" r="2.5" fill="url(#g7)"/>
<circle cx="138.0" cy="582.8" r="2.5" fill="url(#g7)"/>
<circle cx="69.2" cy="595.8" r="2.5" fill="url(#g7)"/>
<circle cx="58.8" cy="605.8" r="2.5" fill="url(#g10)"/>
<circle cx="88.8" cy="600.8" r="2.5" fill="url(#g3)"/>
<circle cx="83.8" cy="608.2" r="2.5" fill="url(#g8)"/>
<circle cx="81.8" cy="613.2" r="2.5" fill="url(#g3)"/>
<circle cx="83.2" cy="620.0" r="2.5" fill="url(#g7)"/>
<circle cx="85.8" cy="626.5" r="2.5" fill="url(#g3)"/>
<circle cx="183.0" cy="606.5" r="3.8" fill="url(#g10)"/>
<circle cx="212.5" cy="600.8" r="2.5" fill="url(#g7)"/>
<circle cx="156.8" cy="621.5" r="3.8" fill="url(#g10)"/>
<circle cx="315.0" cy="250.8" r="4.0" fill="url(#g4)"/>
<circle cx="263.8" cy="255.8" r="2.5" fill="url(#g7)"/>
<circle cx="326.8" cy="300.0" r="2.5" fill="url(#g7)"/>
<circle cx="274.8" cy="342.2" r="11.0" fill="#000"/>
<circle cx="274.8" cy="342.2" r="12.1" fill="url(#G2)"/>
<circle cx="245.8" cy="333.2" r="2.5" fill="url(#g10)"/>
<circle cx="273.8" cy="365.2" r="3.2" fill="url(#g10)"/>
<circle cx="259.5" cy="407.8" r="2.5" fill="url(#g7)"/>
<circle cx="280.0" cy="412.0" r="5.0" fill="url(#g10)"/>
<circle cx="331.2" cy="405.8" r="2.5" fill="url(#g8)"/>
<circle cx="317.0" cy="440.2" r="5.0" fill="url(#g11)"/>
<circle cx="300.0" cy="435.8" r="2.5" fill="url(#g7)"/>
<circle cx="329.5" cy="462.2" r="2.5" fill="url(#g10)"/>
<circle cx="335.0" cy="461.5" r="2.5" fill="url(#g7)"/>
<circle cx="333.0" cy="325.2" r="2.5" fill="url(#g10)"/>
<circle cx="329.5" cy="510.2" r="5.9" fill="#000"/>
<circle cx="329.5" cy="510.2" r="6.5" fill="url(#G11)"/>
<circle cx="295.8" cy="519.5" r="3.8" fill="url(#g10)"/>
<circle cx="285.0" cy="570.0" r="2.5" fill="url(#g3)"/>
<circle cx="306.2" cy="597.5" r="2.5" fill="url(#g3)"/>
<circle cx="363.8" cy="627.8" r="2.5" fill="url(#g10)"/>
<circle cx="625.0" cy="627.0" r="5.0" fill="url(#g5)"/>
<circle cx="519.5" cy="621.5" r="3.1" fill="url(#g5)"/>
<circle cx="658.0" cy="603.8" r="2.5" fill="url(#g10)"/>
<circle cx="685.0" cy="593.2" r="5.6" fill="url(#g11)"/>
<circle cx="785.0" cy="616.5" r="2.5" fill="url(#g11)"/>
<circle cx="833.8" cy="601.5" r="2.5" fill="url(#g5)"/>
<circle cx="811.2" cy="620.8" r="2.5" fill="url(#g5)"/>
<circle cx="673.8" cy="617.8" r="2.5" fill="url(#g10)"/>
<circle cx="966.0" cy="319.4" r="3.8" fill="url(#g5)"/>
<circle cx="954.0" cy="307.5" r="2.5" fill="url(#g7)"/>
<circle cx="958.1" cy="380.0" r="2.5" fill="url(#g10)"/>
<circle cx="958.1" cy="484.9" r="2.5" fill="url(#g5)"/>
<circle cx="525.8" cy="21.2" r="5.0" fill="url(#g11)"/>
<circle cx="545.0" cy="47.5" r="5.0" fill="url(#g3)"/>
<circle cx="600.0" cy="43.8" r="5.2" fill="url(#g9)"/>
<circle cx="589.5" cy="110.2" r="5.5" fill="#000"/>
<circle cx="589.5" cy="110.2" r="6.0" fill="url(#G6)"/>
<circle cx="562.5" cy="21.8" r="2.5" fill="url(#g7)"/>
<circle cx="513.0" cy="61.8" r="2.5" fill="url(#g7)"/>
<circle cx="552.5" cy="87.5" r="2.5" fill="url(#g5)"/>
<circle cx="478.8" cy="100.0" r="3.8" fill="url(#g7)"/>
<circle cx="589.2" cy="21.8" r="2.5" fill="url(#g3)"/>
<circle cx="599.2" cy="21.2" r="2.5" fill="url(#g1)"/>
<circle cx="623.2" cy="20.8" r="2.5" fill="url(#g10)"/>
<circle cx="647.0" cy="88.8" r="2.5" fill="url(#g7)"/>
<circle cx="689.5" cy="45.8" r="5.0" fill="url(#g3)"/>
<circle cx="743.0" cy="26.2" r="3.8" fill="url(#g8)"/>
<circle cx="760.8" cy="43.0" r="2.5" fill="url(#g1)"/>
<circle cx="847.0" cy="32.0" r="3.8" fill="url(#g7)"/>
<circle cx="848.2" cy="2.0" r="5.0" fill="url(#g3)"/>
<circle cx="842.0" cy="10.0" r="2.5" fill="url(#g1)"/>
<circle cx="765.0" cy="76.2" r="3.8" fill="url(#g10)"/>
<circle cx="710.0" cy="100.8" r="3.8" fill="url(#g10)"/>
<circle cx="747.0" cy="100.0" r="2.5" fill="url(#g7)"/>
<circle cx="687.0" cy="109.2" r="2.5" fill="url(#g7)"/>
<circle cx="672.0" cy="90.0" r="2.5" fill="url(#g7)"/>
<circle cx="954.7" cy="23.5" r="5.0" fill="url(#g10)"/>
<circle cx="924.0" cy="66.9" r="3.0" fill="url(#g7)"/>
<circle cx="671.5" cy="72.3" r="14.5" fill="#e1e1e1"/>
<circle cx="6.8" cy="530.4" r="14.8" fill="#ff9a12"/>
<circle cx="-5.6" cy="480.5" r="9.6" fill="#8c8c12"/>
<path d="M291.1 320.7L299.1 328.7M292.5 319.3L300.5 327.3M291.1 327.3L299.1 319.3M292.5 328.7L300.5 320.7M131.10000000000002 294.0L139.10000000000002 302.0M132.5 292.6L140.5 300.6M131.10000000000002 300.6L139.10000000000002 292.6M132.5 302.0L140.5 294.0" stroke="#e6d2c0" stroke-width="0.8" fill="none"/>
<g fill="none" stroke="#e6e22a" stroke-width="1.1">
<circle cx="613.6" cy="109.6" r="9"/><circle cx="613.6" cy="109.6" r="7.1"/>
<path d="M613.6 102.5v4.5M613.6 112.3v4.5M606.5 109.6h4.4M616.3 109.6h4.4"/></g>
<g stroke="#ffee00" stroke-width="1.4"><circle cx="876.5" cy="-5.8" r="11.6" fill="#ffee00" stroke="none"/>
<path d="M867.5 2.6l-4 3.2M876.5 6.5v5M885.5 2.6l4.2 3.2"/></g>
<g fill="none" stroke="#ddd" stroke-width="0.8"><circle cx="54.5" cy="320.5" r="2.2"/><path d="M52.3 320.5h4.4M54.5 318.3v4.4"/>
<circle cx="107.5" cy="619.5" r="2.2"/><path d="M105.3 619.5h4.4M107.5 617.3v4.4"/></g>
<g fill="none" stroke="#f00" stroke-width="0.9"><ellipse cx="298" cy="617.6" rx="1.2" ry="2"/><ellipse cx="729.3" cy="605.3" rx="1.2" ry="2"/></g>

</svg>
<div id="dlg">
<div id="title"><svg class="ico" width="16" height="16" viewBox="0 0 16 16">
<defs><linearGradient id="ic" x1="0" y1="0" x2="0" y2="1">
<stop offset="0" stop-color="#a83028"/><stop offset="0.2" stop-color="#e04c20"/><stop offset="0.34" stop-color="#f8a010"/><stop offset="0.44" stop-color="#f0e818"/>
<stop offset="0.58" stop-color="#4cc820"/><stop offset="0.7" stop-color="#10a888"/><stop offset="0.82" stop-color="#1074a8"/><stop offset="0.93" stop-color="#0c3c58"/><stop offset="1" stop-color="#061820"/></linearGradient></defs>
<path d="M7.1 0 L14.9 15.3 L0 15.3 Z" fill="url(#ic)"/>
<path d="M7.1 0 L14.9 15.3 L13.3 15.3 L6.5 1.4 Z" fill="#08080c"/>
</svg><span class="t ttl" style="left:22.93px;top:4.5px;transform:scaleX(1.0724)">Information</span><div id="close"><svg width="13" height="10" viewBox="0 0 13 10">
<path d="M1.5 1.2 L5 1.2 L6.5 3 L8 1.2 L11.5 1.2 L8.6 4.9 L11.5 8.6 L8 8.6 L6.5 6.8 L5 8.6 L1.5 8.6 L4.4 4.9 Z" fill="#fff" stroke="#7a4a4a" stroke-width="0.7" stroke-linejoin="round"/>
</svg></div></div>
<div id="client">
<div id="msg"><span class="t b" style="left:4.50px;top:5.5px;transform:scaleX(0.9643)">La</span> <span class="t b" style="left:23.00px;top:5.5px;transform:scaleX(0.8883)">connexion</span> <span class="t b" style="left:82.50px;top:5.5px;transform:scaleX(1.1429)">à</span> <span class="t b" style="left:95.80px;top:5.5px;transform:scaleX(0.9536)">ce(s)</span> <span class="t b" style="left:127.50px;top:5.5px;transform:scaleX(0.9355)">different(s)</span> <span class="t b" style="left:191.80px;top:5.5px;transform:scaleX(0.9833)">matériel(s)</span> <span class="t b" style="left:255.80px;top:5.5px;transform:scaleX(0.8778)">s'est</span> <span class="t b" style="left:285.00px;top:5.5px;transform:scaleX(0.8667)">bien</span> <span class="t b" style="left:311.80px;top:5.5px;transform:scaleX(0.9189)">déroulée,</span> <span class="t b" style="left:369.00px;top:5.5px;transform:scaleX(0.9674)">veuillez</span> <span class="t b" style="left:415.32px;top:5.5px;transform:scaleX(0.9755)">inspecter</span> <span class="t b" style="left:473.80px;top:5.5px;transform:scaleX(0.9034)">votre</span> <span class="t b" style="left:505.80px;top:5.5px;transform:scaleX(0.9671)">configuration</span></div>
<div class="gb" style="left:4px;top:27px;width:298px;height:54px"><i class="cap" style="left:5.9px;top:-7.5px;width:52.8px"></i> <span class="t" style="left:7.90px;top:-8.5px;transform:scaleX(0.9208)">Telescope</span> <span class="t b" style="left:9.40px;top:13.5px;transform:scaleX(0.9802)">Système codeurs et/ou moteurs</span></div>
<div class="gb" style="left:308px;top:29px;width:299px;height:52px"><i class="cap" style="left:5.7px;top:-7.5px;width:59.2px"></i> <span class="t" style="left:6.81px;top:-8.5px;transform:scaleX(0.8903)">Focalisation</span> <span class="t b g" style="left:9.70px;top:11.5px;transform:scaleX(0.9730)">Aucun</span></div>
<div class="gb" style="left:4px;top:88px;width:298px;height:53px"><i class="cap" style="left:5.9px;top:-6.5px;width:54.2px"></i> <span class="t" style="left:7.00px;top:-7.5px;transform:scaleX(0.8964)">Encodeurs</span> <span class="t b" style="left:9.40px;top:12.5px;transform:scaleX(1.0326)">Lib. DLL : MCMTII DLL version 4.2.1.195</span></div>
<div class="gb" style="left:308px;top:88px;width:299px;height:52px"><i class="cap" style="left:5.7px;top:-6.5px;width:65.3px"></i> <span class="t" style="left:6.81px;top:-7.5px;transform:scaleX(0.8884)">Roue à filtres</span> <span class="t b g" style="left:9.70px;top:12.5px;transform:scaleX(0.9730)">Aucun</span></div>
<div class="gb" style="left:4px;top:148px;width:298px;height:53px"><i class="cap" style="left:5.9px;top:-6.5px;width:60.2px"></i> <span class="t" style="left:7.02px;top:-7.5px;transform:scaleX(0.8781)">Motorisation</span> <span class="t b" style="left:9.40px;top:12.5px;transform:scaleX(1.0326)">Lib. DLL : MCMTII DLL version 4.2.1.195</span></div>
<div class="gb" style="left:308px;top:148px;width:299px;height:52px"><i class="cap" style="left:5.7px;top:-6.5px;width:65.5px"></i> <span class="t" style="left:6.80px;top:-7.5px;transform:scaleX(0.9044)">Coupole/Abri</span> <span class="t b" style="left:9.70px;top:12.5px;transform:scaleX(1.0614)">Lib. DLL : DomeTracker, 31/01/14,v1.96</span> <span class="t b" style="left:9.70px;top:25.5px;transform:scaleX(0.9771)">Firmware=1.57</span></div>
<div class="gb" style="left:4px;top:208px;width:298px;height:53px"><i class="cap" style="left:5.9px;top:-6.5px;width:251.5px"></i> <span class="t" style="left:7.00px;top:-7.5px;transform:scaleX(0.9000)">Guidage (raquettage des mvts lents ALPHA/DELTA)</span> <span class="t b g" style="left:9.40px;top:12.5px;transform:scaleX(0.9730)">Aucun</span></div>
<div class="gb" style="left:308px;top:208px;width:299px;height:52px"><i class="cap" style="left:5.7px;top:-6.5px;width:68px"></i> <span class="t" style="left:6.82px;top:-7.5px;transform:scaleX(0.8767)">Station météo</span> <span class="t b g" style="left:9.70px;top:12.5px;transform:scaleX(0.9730)">Aucun</span></div>
<div class="gb" style="left:4px;top:268px;width:298px;height:53px"><i class="cap" style="left:5.9px;top:-6.5px;width:97.3px"></i> <span class="t" style="left:7.01px;top:-7.5px;transform:scaleX(0.8886)">Moniteur de nuages</span> <span class="t b g" style="left:9.40px;top:12.5px;transform:scaleX(0.9730)">Aucun</span></div>
<div class="gb" style="left:308px;top:268px;width:299px;height:52px"><i class="cap" style="left:5.7px;top:-6.5px;width:103.4px"></i> <span class="t" style="left:6.80px;top:-7.5px;transform:scaleX(0.8955)">Dérotateur de champ</span> <span class="t b g" style="left:9.70px;top:12.5px;transform:scaleX(0.9730)">Aucun</span></div>
<div class="gb" style="left:4px;top:328px;width:298px;height:53px"><i class="cap" style="left:5.9px;top:-6.5px;width:120.1px"></i> <span class="t" style="left:7.03px;top:-7.5px;transform:scaleX(0.8729)">Gestion des interrupteurs</span> <span class="t b g" style="left:9.40px;top:16.5px;transform:scaleX(0.9730)">Aucun</span></div>
<div class="gb" style="left:308px;top:328px;width:299px;height:52px"><i class="cap" style="left:5.7px;top:-6.5px;width:114.1px"></i> <span class="t" style="left:6.82px;top:-7.5px;transform:scaleX(0.8808)">Focalisation secondaire</span> <span class="t b g" style="left:9.70px;top:12.5px;transform:scaleX(0.9730)">Aucun</span></div>
<div id="ok"><span class="t" style="left:107.30px;top:8.5px;transform:scaleX(0.8647)">OK</span></div>
</div></div>
</body></html>
